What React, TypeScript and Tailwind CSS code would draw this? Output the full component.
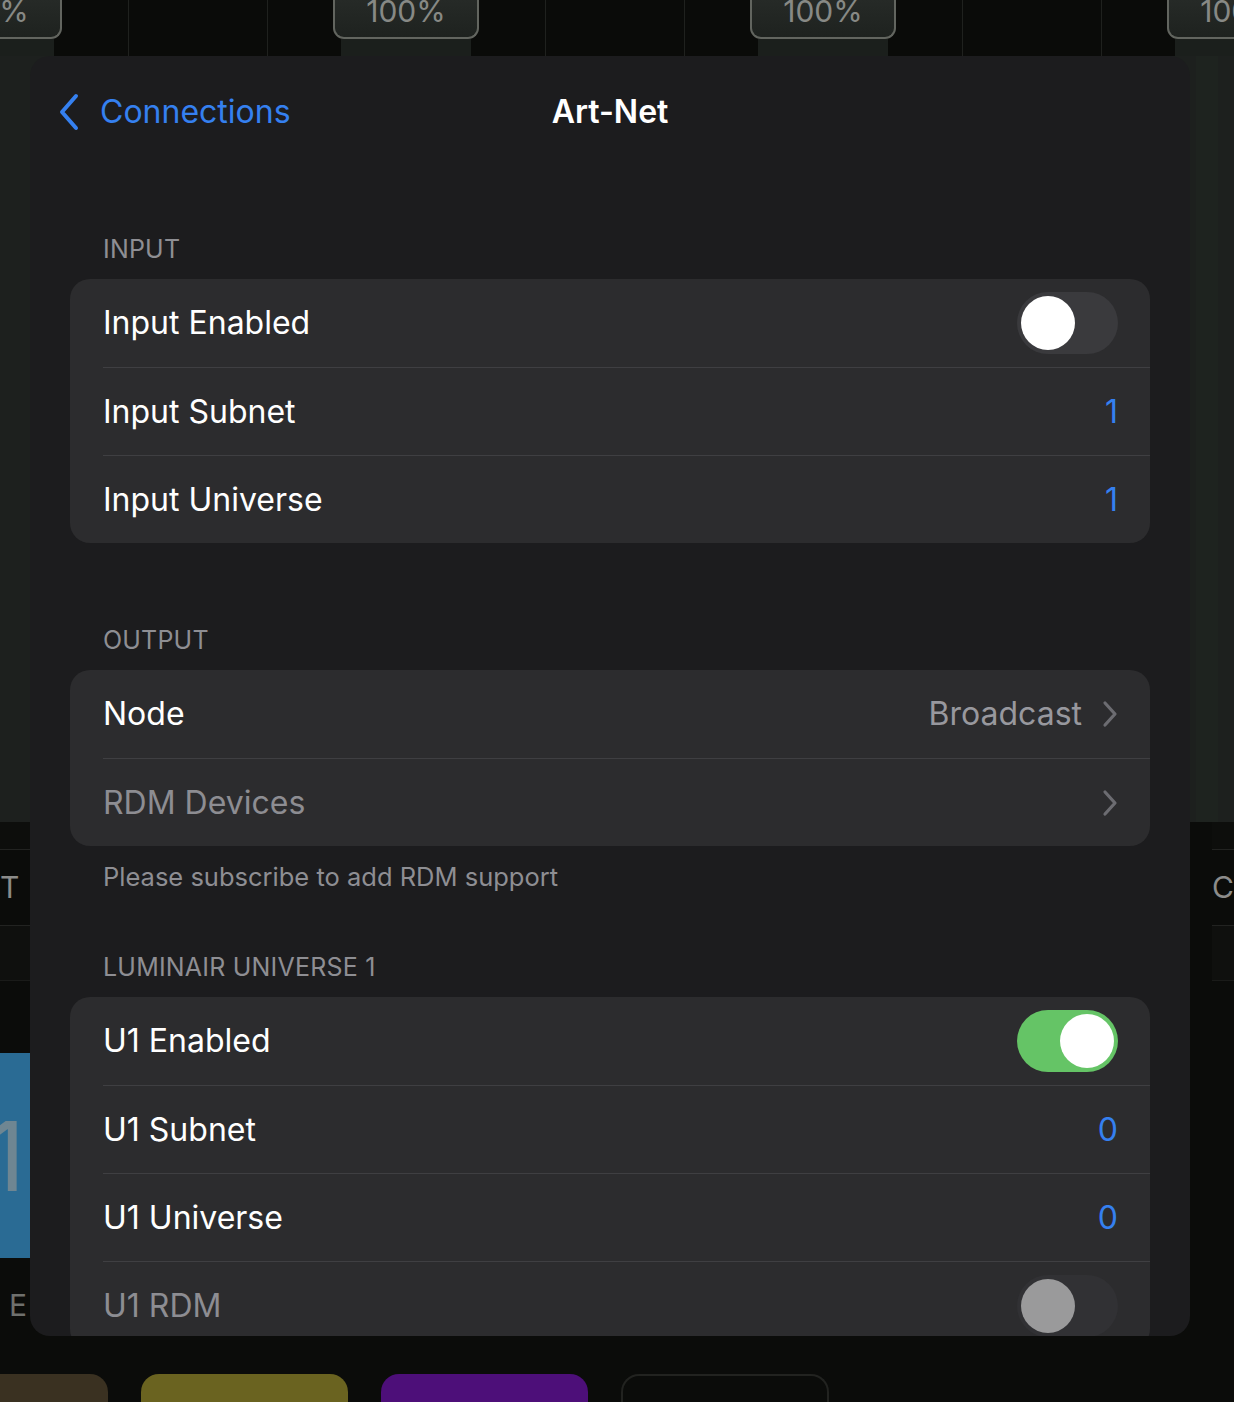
import React from "react";

const FONT = { fontFamily: "Inter, 'Noto Sans', sans-serif" };

function Toggle({ state }: { state: "on" | "off" | "disabled" }) {
  const track =
    state === "on" ? "bg-[#65c466] justify-end" : state === "off" ? "bg-[#3a3a3d] justify-start" : "bg-[#313134] justify-start";
  const knob = state === "disabled" ? "bg-[#9a9a9b]" : "bg-white";
  return (
    <div className={`flex h-[62px] w-[101px] shrink-0 items-center rounded-full p-[4px] ${track}`}>
      <div className={`h-[54px] w-[54px] rounded-full ${knob}`} />
    </div>
  );
}

function ChevronRight() {
  return (
    <svg width="16" height="28" viewBox="0 0 16 28" fill="none">
      <path d="M3 3 L13 14 L3 25" stroke="#6c6c71" strokeWidth="3.2" strokeLinecap="round" strokeLinejoin="round" />
    </svg>
  );
}

function Row({
  label,
  first,
  dim,
  children,
}: {
  label: string;
  first?: boolean;
  dim?: boolean;
  children?: React.ReactNode;
}) {
  return (
    <div
      className={`ml-[33px] flex h-[88px] shrink-0 items-center justify-between pr-[32px] ${first ? "" : "border-t border-[#3f3f42]"}`}
    >
      <span className={`text-[32px] ${dim ? "text-[#8d8d92]" : "text-white"}`}>{label}</span>
      {children}
    </div>
  );
}

function Card({ children }: { children: React.ReactNode }) {
  return <div className="flex shrink-0 flex-col overflow-hidden rounded-[20px] bg-[#2c2c2e]">{children}</div>;
}

function Header({ children, className = "" }: { children: React.ReactNode; className?: string }) {
  return (
    <div
      className={`flex h-[30px] shrink-0 items-center pl-[33px] text-[25px] uppercase tracking-[0.2px] text-[#8e8e93] ${className}`}
    >
      {children}
    </div>
  );
}

function Value({ children }: { children: React.ReactNode }) {
  return <span className="text-[32px] text-[#3580f0]">{children}</span>;
}

function FaderColumn() {
  return (
    <div className="relative flex h-full w-[417px] shrink-0 border-l border-[#1f211e]">
      <div className="ml-[65px] flex h-full w-[146px] flex-col">
        <div className="flex h-[39px] items-end justify-center rounded-b-[11px] border-2 border-t-0 border-[#62655f] bg-gradient-to-b from-[#262a27] to-[#1e221f] pb-[11px]">
          <span className="text-[30px] leading-[30px] text-[#878985]">100%</span>
        </div>
        <div className="mx-[8px] flex-1 bg-[#1b1f1c]" />
      </div>
      <div className="ml-[66px] h-full border-l border-[#1f211e]" />
    </div>
  );
}

function SideStrip({ letter, big, bottom }: { letter: string; big?: boolean; bottom?: string }) {
  return (
    <div className="flex h-full flex-col overflow-hidden">
      <div className="h-[28px] shrink-0 border-b border-[#222321] bg-[#0d0e0c]" />
      <div className="flex h-[76px] shrink-0 items-center border-b border-[#222321]">
        <span className="text-[30px] text-[#8c8c8a]">{letter}</span>
      </div>
      <div className="h-[55px] shrink-0 border-b border-[#1a1b19] bg-[#0f100e]" />
      {big ? (
        <>
          <div className="h-[72px] shrink-0" />
          <div className="flex h-[205px] shrink-0 items-center bg-[#2a6b94]">
            <span className="-ml-[14px] text-[96px] leading-none text-[#6f8692]">1</span>
          </div>
          <div className="flex h-[95px] shrink-0 items-center pl-[9px]">
            <span className="text-[30px] text-[#6f706d]">{bottom}</span>
          </div>
        </>
      ) : null}
    </div>
  );
}

export default function App() {
  return (
    <div className="relative h-[1402px] w-[1234px] overflow-hidden bg-[#0b0c0a]" style={FONT}>
      {/* background app */}
      <div className="flex h-full flex-col">
        <div className="flex h-[56px] shrink-0 bg-[#0a0b09]">
          <div className="-ml-[150px] flex h-full">
            <FaderColumn />
            <FaderColumn />
            <FaderColumn />
            <FaderColumn />
          </div>
        </div>
        <div className="flex h-[766px] shrink-0 justify-between bg-[#1d201e]">
          <div className="w-[30px]" />
          <div className="flex w-[44px] justify-start">
            <div className="ml-[6px] w-[22px] bg-[#1e231f]" />
          </div>
        </div>
        <div className="flex h-[514px] shrink-0 justify-between bg-[#0b0c0a]">
          <div className="w-[30px]">
            <SideStrip letter="T" big bottom="E" />
          </div>
          <div className="w-[44px] pl-[22px]">
            <SideStrip letter="C" />
          </div>
        </div>
        <div className="flex flex-1 items-end bg-[#0b0c0a]">
          <div className="-ml-[99px] flex h-[28px] gap-[33px]">
            <div className="w-[207px] rounded-t-[18px] bg-[#3a3121]" />
            <div className="w-[207px] rounded-t-[18px] bg-[#6a6320]" />
            <div className="w-[207px] rounded-t-[18px] bg-[#4d0f79]" />
            <div className="w-[208px] rounded-t-[18px] border-2 border-b-0 border-[#222320] bg-[#0b0c0a]" />
          </div>
        </div>
      </div>

      {/* modal sheet */}
      <div className="absolute left-[30px] top-[56px] flex h-[1280px] w-[1160px] flex-col overflow-hidden rounded-[20px] bg-[#1c1c1e] px-[40px]">
        <div className="-mx-[12px] grid h-[112px] shrink-0 grid-cols-[1fr_auto_1fr] items-center">
          <div className="flex items-center gap-[20px]">
            <svg width="22" height="38" viewBox="0 0 22 38" fill="none">
              <path d="M18 3 L4 19 L18 35" stroke="#3580f0" strokeWidth="4" strokeLinecap="round" strokeLinejoin="round" />
            </svg>
            <span className="text-[32px] text-[#3580f0]">Connections</span>
          </div>
          <span className="text-[32px] font-semibold text-white">Art-Net</span>
          <div />
        </div>

        <Header className="mt-[67px] mb-[14px]">Input</Header>
        <Card>
          <Row label="Input Enabled" first>
            <Toggle state="off" />
          </Row>
          <Row label="Input Subnet">
            <Value>1</Value>
          </Row>
          <Row label="Input Universe">
            <Value>1</Value>
          </Row>
        </Card>

        <Header className="mt-[83px] mb-[14px]">Output</Header>
        <Card>
          <Row label="Node" first>
            <div className="flex items-center gap-[20px]">
              <span className="text-[32px] text-[#98989e]">Broadcast</span>
              <ChevronRight />
            </div>
          </Row>
          <Row label="RDM Devices" dim>
            <ChevronRight />
          </Row>
        </Card>
        <div className="mt-[16px] flex h-[30px] shrink-0 items-center pl-[33px] text-[25.5px] text-[#8e8e93]">
          Please subscribe to add RDM support
        </div>

        <Header className="mt-[61px] mb-[14px]">Luminair Universe 1</Header>
        <Card>
          <Row label="U1 Enabled" first>
            <Toggle state="on" />
          </Row>
          <Row label="U1 Subnet">
            <Value>0</Value>
          </Row>
          <Row label="U1 Universe">
            <Value>0</Value>
          </Row>
          <Row label="U1 RDM" dim>
            <Toggle state="disabled" />
          </Row>
        </Card>
      </div>
    </div>
  );
}
